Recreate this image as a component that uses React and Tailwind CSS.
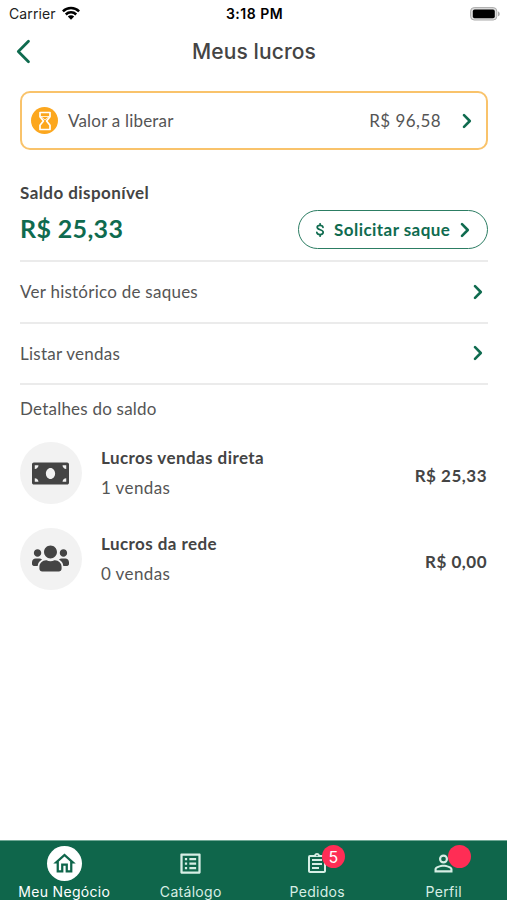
import clsx from "clsx";
import { FaMoneyBill, FaUsers } from "react-icons/fa";
import { MdOutlineHome, MdListAlt, MdPersonOutline } from "react-icons/md";

function Chevron({ className, left = false, stroke = 2.6 }) {
  return (
    <svg viewBox="0 0 10 16" fill="none" stroke="#0f6b4f" strokeWidth={stroke} strokeLinecap="round" strokeLinejoin="round" className={className}>
      <path d={left ? "M8.5 1.5 2 8l6.5 6.5" : "M2 2.2 7.8 8 2 13.8"} />
    </svg>
  );
}

function StatusBar() {
  return (
    <div className="grid h-[27px] grid-cols-3 items-center pr-[7px] pl-[9px] font-['Inter'] text-[14px] text-[#222]">
      <div className="flex items-center gap-1.5">
        <span className="tracking-[0.1px]">Carrier</span>
        <svg viewBox="0 0 18 14" className="mb-0.5 h-[14px] w-[18px]" fill="none" stroke="#000" strokeWidth="2.5">
          <path d="M.9 5.3a11.5 11.5 0 0 1 16.2 0" />
          <path d="M3.8 8.5a7.4 7.4 0 0 1 10.4 0" />
          <path d="M9 13.8 5.8 10.6a4.6 4.6 0 0 1 6.4 0z" fill="#000" stroke="none" />
        </svg>
      </div>
      <span className="text-center font-semibold tracking-[0.5px] text-black">3:18 PM</span>
      <svg viewBox="0 0 30 14" className="h-[14px] w-[30px] justify-self-end">
        <rect x=".6" y=".6" width="26.2" height="12.4" rx="3.6" fill="#ddd" stroke="#aaa" />
        <rect x="2.8" y="2.6" width="22" height="8.6" rx="1.8" fill="#000" />
        <path d="M28 4.6c2.3.7 2.3 3.9 0 4.6z" fill="#aaa" />
      </svg>
    </div>
  );
}

function MenuRow({ label }) {
  return (
    <button className="flex h-[61.5px] w-full items-center justify-between border-b-2 border-[#ebebeb] pr-[5px]">
      <span className="text-[17px] tracking-[0.25px]">{label}</span>
      <Chevron className="h-4 w-2.5" />
    </button>
  );
}

function DetailRow({ icon, title, count, value }) {
  return (
    <div className="flex h-[62px] items-center">
      <div className="flex size-[62px] items-center justify-center rounded-full bg-[#f2f2f2] pr-px text-[#444]">{icon}</div>
      <div className="ml-[19px] flex-1">
        <p className="text-[17px] leading-[30px] font-bold tracking-[0.43px] text-[#444]">{title}</p>
        <p className="text-[17px] leading-[30px] tracking-[0.4px]">{count}</p>
      </div>
      <span className="mt-1.5 mr-px text-[17px] font-bold tracking-[0.5px] text-[#444]">{value}</span>
    </div>
  );
}

function ClipboardIcon() {
  return (
    <svg viewBox="0 0 24 24" className="size-6" fill="currentColor">
      <path d="M7 15h7v2H7zm0-4h10v2H7zm0-4h10v2H7z" />
      <path d="M19 3h-4.18C14.4 1.84 13.3 1 12 1s-2.4.84-2.82 2H5a2 2 0 0 0-2 2v14c0 1.1.9 2 2 2h14c1.1 0 2-.9 2-2V5c0-1.1-.9-2-2-2m-7-.25a.75.75 0 1 1 0 1.5.75.75 0 0 1 0-1.5M19 19H5V5h14z" />
    </svg>
  );
}

function Tab({ icon, label, active, badge }) {
  return (
    <button className="flex flex-col items-center pt-[5px] text-[#d7eee5]">
      <span className={clsx("relative flex size-[35px] items-center justify-center rounded-full", active && "bg-white text-[#0f664b]")}>
        {icon}
        {badge !== undefined && (
          <span className="absolute -top-px left-[22px] flex size-[23px] items-center justify-center rounded-full bg-[#ff2d55] font-['Inter'] text-[16px] text-white">
            {badge}
          </span>
        )}
      </span>
      <span className={clsx("mt-px font-['Inter'] text-[14px] leading-5 tracking-[0.3px]", active && "text-white")}>{label}</span>
    </button>
  );
}

export default function App() {
  return (
    <div className="flex h-[900px] w-[507px] flex-col overflow-hidden bg-white font-['Lato',sans-serif] text-[#555]">
      <StatusBar />
      <header className="grid h-[49px] grid-cols-[1fr_auto_1fr] items-center pl-px">
        <Chevron left stroke={1.8} className="ml-[14px] h-[25px] w-4" />
        <h1 className="font-['Inter'] text-[21px] font-medium tracking-[0.1px] text-[#444]">Meus lucros</h1>
      </header>

      <main className="flex-1 pt-[15px] pr-[19px] pl-[20px]">
        <button className="flex h-[59px] w-full items-center rounded-[10px] border-2 border-[#f9c36b] pr-[14px] pl-[9px]">
          <span className="flex size-[27px] items-center justify-center rounded-full bg-[#fca71e]">
            <svg viewBox="0 0 14 20" className="h-5 w-3.5" fill="none" stroke="#fff" strokeWidth="1.7" strokeLinejoin="round">
              <path d="M2 1.5h10v4.3L8.6 10l3.4 4.2v4.3H2v-4.3L5.4 10 2 5.8z" />
              <path d="M3 5.5h8L7 9z" strokeWidth=".8" />
            </svg>
          </span>
          <span className="ml-[10px] text-[17px] tracking-[0.2px]">Valor a liberar</span>
          <span className="mr-[21px] ml-auto text-[17px] tracking-[0.45px]">R$ 96,58</span>
          <Chevron className="h-4 w-2.5" />
        </button>

        <section className="flex h-[112px] items-end justify-between border-b-2 border-[#ebebeb] pb-[11px]">
          <div>
            <p className="text-[17px] leading-6 font-bold tracking-[0.43px] text-[#444]">Saldo disponível</p>
            <p className="mt-1.5 mb-1 text-[25px] leading-[34px] font-bold tracking-[0.35px] text-[#0f6b4f]">R$ 25,33</p>
          </div>
          <button className="flex h-[39px] w-[190px] items-center rounded-full border-[1.5px] border-[#2c7d63] pl-4 text-[17px] font-bold text-[#0f6b4f]">
            <svg viewBox="0 0 10 14" className="h-3.5 w-2.5" fill="none" stroke="currentColor" strokeWidth="1.7" strokeLinecap="round">
              <path d="M8 4.3C7.6 1.6 2.2 1.8 2.2 4.3c0 3 6 2 6 5 0 2.9-5.9 3.1-6.4.1M5.1.8v1.5M5.1 11.7v1.5" />
            </svg>
            <span className="ml-[9px] tracking-[0.45px]">Solicitar saque</span>
            <Chevron className="mr-[17px] ml-auto h-4 w-2.5" />
          </button>
        </section>

        <MenuRow label="Ver histórico de saques" />
        <MenuRow label="Listar vendas" />

        <h2 className="mt-3 text-[17px] leading-6 tracking-[0.22px]">Detalhes do saldo</h2>
        <div className="mt-[21px] flex flex-col gap-6">
          <DetailRow icon={<FaMoneyBill className="size-[37px]" />} title="Lucros vendas direta" count="1 vendas" value="R$ 25,33" />
          <DetailRow icon={<FaUsers className="mb-0.5 size-[37px]" />} title="Lucros da rede" count="0 vendas" value="R$ 0,00" />
        </div>
      </main>

      <nav className="grid h-[60px] grid-cols-4 items-start border-t border-[#6fa895] bg-[#0f664b] pl-px">
        <Tab active icon={<MdOutlineHome className="size-[27px]" />} label="Meu Negócio" />
        <Tab icon={<MdListAlt className="size-[27px]" />} label="Catálogo" />
        <Tab icon={<ClipboardIcon />} label="Pedidos" badge="5" />
        <Tab icon={<MdPersonOutline className="size-[27px]" />} label="Perfil" badge="" />
      </nav>
    </div>
  );
}
